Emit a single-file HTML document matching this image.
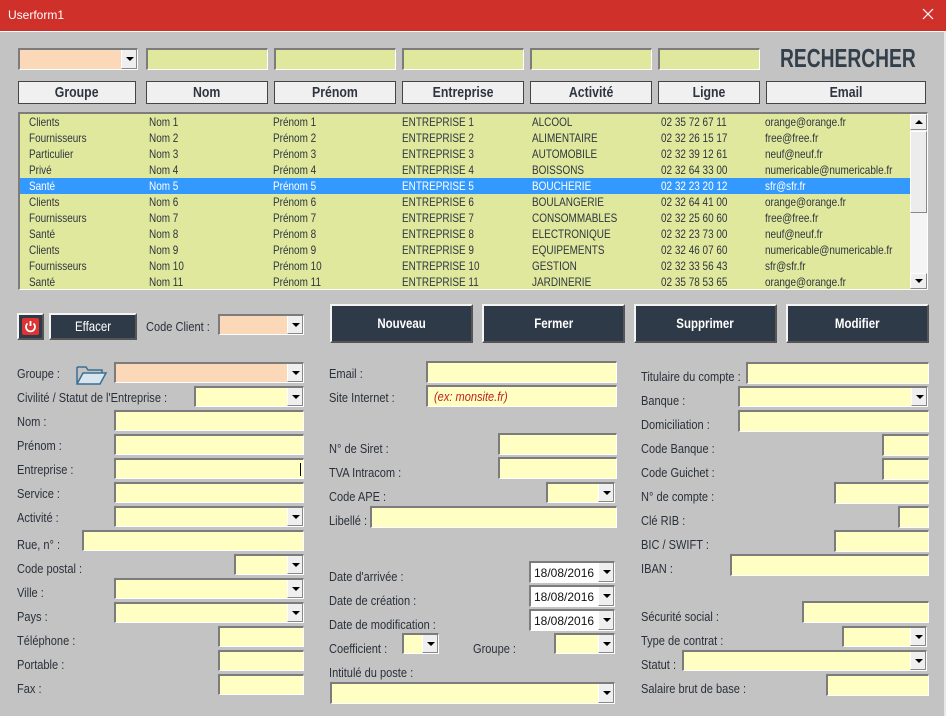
<!DOCTYPE html>
<html><head><meta charset="utf-8">
<style>
*{box-sizing:border-box;margin:0;padding:0}
body{width:946px;height:716px;background:#c3c3c3;position:relative;overflow:hidden;font-family:"Liberation Sans Narrow","Liberation Sans",sans-serif;color:#2f3540}
.a{position:absolute}
#tb{left:0;top:0;width:946px;height:31px;background:#d0302a;color:#fff;font-family:"Liberation Sans",sans-serif;font-size:12px;padding:8px 0 0 8px}
#frame{left:0;top:31px;width:946px;height:685px;border-top:1px solid #fff;border-right:2px solid #e8e8e8}
.in{position:absolute;background:#ffffc4;border-top:2px solid #7c7c7c;border-left:2px solid #7c7c7c;border-bottom:1px solid #fff;border-right:1px solid #fff}
.g{background:#dfe89c}
.p{background:#fbd8b8}
.w{background:#fff;font-family:"Liberation Sans",sans-serif;font-size:12px;padding:3px 0 0 3px;color:#111}
.dd{position:absolute;right:0;top:0;bottom:0;width:16px;background:#efefef;border-left:1px solid #fff;border-bottom:1px solid #888;border-right:1px solid #888}
.dd:after{content:"";position:absolute;left:4px;top:50%;margin-top:-2px;border-left:4px solid transparent;border-right:4px solid transparent;border-top:4px solid #000}
.hb{position:absolute;top:81px;height:23px;background:#f0f0f0;border:1px solid #444;font-weight:bold;font-size:15px;text-align:center;line-height:21px;color:#2f3540}
.hb span,.db span{display:inline-block;transform:scaleX(.82)}
.l{position:absolute;font-size:13px;color:#2a303a;white-space:nowrap;transform:scaleX(.85);transform-origin:left top;margin-top:-1px}
.db{position:absolute;background:#2e3a48;color:#fff;font-weight:bold;font-size:14px;text-align:center;border:2px solid #f4f4f4;border-right-color:#555;border-bottom-color:#555}
#list{left:18px;top:112px;width:910px;height:178px;background:#dfe89c;border-top:2px solid #7c7c7c;border-left:2px solid #7c7c7c;border-bottom:1px solid #fff;border-right:1px solid #fff;overflow:hidden}
.r{position:absolute;left:0;width:890px;height:16px;font-size:12px;line-height:16px}
.r span{position:absolute;white-space:nowrap;transform:scaleX(.83);transform-origin:left}
.sel{background:#3399ff;color:#fff}
</style></head><body>
<div id="tb" class="a">Userform1</div>
<svg class="a" style="left:922px;top:8px" width="12" height="12" viewBox="0 0 12 12"><path d="M1 1L11 11M11 1L1 11" stroke="#fff" stroke-width="1.2"/></svg>
<div id="frame" class="a"></div>

<div class="in p" style="left:18px;top:48px;width:120px;height:22px"><div class="dd"></div></div>
<div class="in g" style="left:146px;top:48px;width:122px;height:22px"></div>
<div class="in g" style="left:274px;top:48px;width:122px;height:22px"></div>
<div class="in g" style="left:402px;top:48px;width:122px;height:22px"></div>
<div class="in g" style="left:530px;top:48px;width:122px;height:22px"></div>
<div class="in g" style="left:658px;top:48px;width:102px;height:22px"></div>
<div class="a" style="left:780px;top:43px;font-size:26px;font-weight:bold;color:#333f4a;transform:scaleX(.74);transform-origin:left top;white-space:nowrap">RECHERCHER</div>

<div class="hb" style="left:18px;width:118px"><span>Groupe</span></div>
<div class="hb" style="left:146px;width:122px"><span>Nom</span></div>
<div class="hb" style="left:274px;width:122px"><span>Prénom</span></div>
<div class="hb" style="left:402px;width:122px"><span>Entreprise</span></div>
<div class="hb" style="left:530px;width:122px"><span>Activité</span></div>
<div class="hb" style="left:658px;width:102px"><span>Ligne</span></div>
<div class="hb" style="left:766px;width:160px"><span>Email</span></div>

<div id="list" class="a">
<div class="r" style="top:0"><span style="left:9px">Clients</span><span style="left:129px">Nom 1</span><span style="left:253px">Prénom 1</span><span style="left:382px">ENTREPRISE 1</span><span style="left:512px">ALCOOL</span><span style="left:641px">02 35 72 67 11</span><span style="left:745px">orange@orange.fr</span></div>
<div class="r" style="top:16px"><span style="left:9px">Fournisseurs</span><span style="left:129px">Nom 2</span><span style="left:253px">Prénom 2</span><span style="left:382px">ENTREPRISE 2</span><span style="left:512px">ALIMENTAIRE</span><span style="left:641px">02 32 26 15 17</span><span style="left:745px">free@free.fr</span></div>
<div class="r" style="top:32px"><span style="left:9px">Particulier</span><span style="left:129px">Nom 3</span><span style="left:253px">Prénom 3</span><span style="left:382px">ENTREPRISE 3</span><span style="left:512px">AUTOMOBILE</span><span style="left:641px">02 32 39 12 61</span><span style="left:745px">neuf@neuf.fr</span></div>
<div class="r" style="top:48px"><span style="left:9px">Privé</span><span style="left:129px">Nom 4</span><span style="left:253px">Prénom 4</span><span style="left:382px">ENTREPRISE 4</span><span style="left:512px">BOISSONS</span><span style="left:641px">02 32 64 33 00</span><span style="left:745px">numericable@numericable.fr</span></div>
<div class="r sel" style="top:64px"><span style="left:9px">Santé</span><span style="left:129px">Nom 5</span><span style="left:253px">Prénom 5</span><span style="left:382px">ENTREPRISE 5</span><span style="left:512px">BOUCHERIE</span><span style="left:641px">02 32 23 20 12</span><span style="left:745px">sfr@sfr.fr</span></div>
<div class="r" style="top:80px"><span style="left:9px">Clients</span><span style="left:129px">Nom 6</span><span style="left:253px">Prénom 6</span><span style="left:382px">ENTREPRISE 6</span><span style="left:512px">BOULANGERIE</span><span style="left:641px">02 32 64 41 00</span><span style="left:745px">orange@orange.fr</span></div>
<div class="r" style="top:96px"><span style="left:9px">Fournisseurs</span><span style="left:129px">Nom 7</span><span style="left:253px">Prénom 7</span><span style="left:382px">ENTREPRISE 7</span><span style="left:512px">CONSOMMABLES</span><span style="left:641px">02 32 25 60 60</span><span style="left:745px">free@free.fr</span></div>
<div class="r" style="top:112px"><span style="left:9px">Santé</span><span style="left:129px">Nom 8</span><span style="left:253px">Prénom 8</span><span style="left:382px">ENTREPRISE 8</span><span style="left:512px">ELECTRONIQUE</span><span style="left:641px">02 32 23 73 00</span><span style="left:745px">neuf@neuf.fr</span></div>
<div class="r" style="top:128px"><span style="left:9px">Clients</span><span style="left:129px">Nom 9</span><span style="left:253px">Prénom 9</span><span style="left:382px">ENTREPRISE 9</span><span style="left:512px">EQUIPEMENTS</span><span style="left:641px">02 32 46 07 60</span><span style="left:745px">numericable@numericable.fr</span></div>
<div class="r" style="top:144px"><span style="left:9px">Fournisseurs</span><span style="left:129px">Nom 10</span><span style="left:253px">Prénom 10</span><span style="left:382px">ENTREPRISE 10</span><span style="left:512px">GESTION</span><span style="left:641px">02 32 33 56 43</span><span style="left:745px">sfr@sfr.fr</span></div>
<div class="r" style="top:160px"><span style="left:9px">Santé</span><span style="left:129px">Nom 11</span><span style="left:253px">Prénom 11</span><span style="left:382px">ENTREPRISE 11</span><span style="left:512px">JARDINERIE</span><span style="left:641px">02 35 78 53 65</span><span style="left:745px">orange@orange.fr</span></div>
<div class="a" style="left:890px;top:0;width:17px;height:175px;background:#f4f4f4">
 <div class="a" style="left:0;top:0;width:17px;height:16px;background:#efefef;border:1px solid #888;border-top-color:#fff;border-left-color:#fff"><div class="a" style="left:4px;top:5px;border-left:4px solid transparent;border-right:4px solid transparent;border-bottom:4px solid #000"></div></div>
 <div class="a" style="left:0;top:17px;width:17px;height:82px;background:#ececec;border:1px solid #888;border-top-color:#fff;border-left-color:#fff"></div>
 <div class="a" style="left:0;top:159px;width:17px;height:16px;background:#efefef;border:1px solid #888;border-top-color:#fff;border-left-color:#fff"><div class="a" style="left:4px;top:5px;border-left:4px solid transparent;border-right:4px solid transparent;border-top:4px solid #000"></div></div>
</div>
</div>

<div class="db" style="left:17px;top:313px;width:27px;height:27px;background:#2e3a48">
 <div class="a" style="left:3px;top:3px;width:17px;height:17px;background:#d33;border-radius:2px"><svg width="17" height="17" viewBox="0 0 17 17"><path d="M5.5 5.5A4.5 4.5 0 1 0 11.5 5.5" stroke="#fff" stroke-width="1.8" fill="none"/><path d="M8.5 3v5" stroke="#fff" stroke-width="1.8"/></svg></div>
</div>
<div class="db" style="left:49px;top:313px;width:88px;height:27px;line-height:23px;font-weight:normal;font-size:14px"><span>Effacer</span></div>
<div class="l" style="left:146px;top:320px">Code Client :</div>
<div class="in p" style="left:218px;top:314px;width:86px;height:21px"><div class="dd"></div></div>

<div class="db" style="left:330px;top:304px;width:143px;height:39px;line-height:35px"><span>Nouveau</span></div>
<div class="db" style="left:482px;top:304px;width:143px;height:39px;line-height:35px"><span>Fermer</span></div>
<div class="db" style="left:634px;top:304px;width:143px;height:39px;line-height:35px"><span>Supprimer</span></div>
<div class="db" style="left:786px;top:304px;width:143px;height:39px;line-height:35px"><span>Modifier</span></div>

<!-- left column -->
<div class="l" style="left:17px;top:367px">Groupe :</div>
<svg class="a" style="left:75px;top:364px" width="34" height="22" viewBox="0 0 34 22"><path d="M2 3h9l2 3h14v4" fill="none" stroke="#3a6f93" stroke-width="1.5"/><path d="M2 3v17h23l6-11H8L2 20" fill="#d8e4ee" stroke="#3a6f93" stroke-width="1.5"/></svg>
<div class="in p" style="left:114px;top:362px;width:190px;height:21px"><div class="dd"></div></div>
<div class="l" style="left:17px;top:391px">Civilité / Statut de l'Entreprise :</div>
<div class="in" style="left:194px;top:386px;width:110px;height:21px"><div class="dd"></div></div>
<div class="l" style="left:17px;top:415px">Nom :</div>
<div class="in" style="left:114px;top:410px;width:190px;height:21px"></div>
<div class="l" style="left:17px;top:439px">Prénom :</div>
<div class="in" style="left:114px;top:434px;width:190px;height:21px"></div>
<div class="l" style="left:17px;top:463px">Entreprise :</div>
<div class="in" style="left:114px;top:458px;width:190px;height:21px"><div class="a" style="right:2px;top:3px;width:1px;height:13px;background:#000"></div></div>
<div class="l" style="left:17px;top:487px">Service :</div>
<div class="in" style="left:114px;top:482px;width:190px;height:21px"></div>
<div class="l" style="left:17px;top:511px">Activité :</div>
<div class="in" style="left:114px;top:506px;width:190px;height:21px"><div class="dd"></div></div>
<div class="l" style="left:17px;top:538px">Rue, n° :</div>
<div class="in" style="left:82px;top:530px;width:222px;height:21px"></div>
<div class="l" style="left:17px;top:562px">Code postal :</div>
<div class="in" style="left:234px;top:554px;width:70px;height:21px"><div class="dd"></div></div>
<div class="l" style="left:17px;top:586px">Ville :</div>
<div class="in" style="left:114px;top:578px;width:190px;height:21px"><div class="dd"></div></div>
<div class="l" style="left:17px;top:610px">Pays :</div>
<div class="in" style="left:114px;top:602px;width:190px;height:21px"><div class="dd"></div></div>
<div class="l" style="left:17px;top:634px">Téléphone :</div>
<div class="in" style="left:218px;top:626px;width:86px;height:21px"></div>
<div class="l" style="left:17px;top:658px">Portable :</div>
<div class="in" style="left:218px;top:650px;width:86px;height:21px"></div>
<div class="l" style="left:17px;top:682px">Fax :</div>
<div class="in" style="left:218px;top:674px;width:86px;height:21px"></div>

<!-- middle -->
<div class="l" style="left:329px;top:367px">Email :</div>
<div class="in" style="left:426px;top:361px;width:191px;height:22px"></div>
<div class="l" style="left:329px;top:391px">Site Internet :</div>
<div class="in" style="left:426px;top:385px;width:191px;height:22px;color:#c0201a;font-style:italic;font-size:13px;padding:2px 0 0 6px"><span style="display:inline-block;transform:scaleX(.85);transform-origin:left">(ex: monsite.fr)</span></div>
<div class="l" style="left:329px;top:442px">N° de Siret :</div>
<div class="in" style="left:498px;top:433px;width:119px;height:22px"></div>
<div class="l" style="left:329px;top:466px">TVA Intracom :</div>
<div class="in" style="left:498px;top:457px;width:119px;height:22px"></div>
<div class="l" style="left:329px;top:490px">Code APE :</div>
<div class="in" style="left:546px;top:482px;width:69px;height:21px"><div class="dd"></div></div>
<div class="l" style="left:329px;top:514px">Libellé :</div>
<div class="in" style="left:370px;top:506px;width:247px;height:22px"></div>
<div class="l" style="left:329px;top:570px">Date d'arrivée :</div>
<div class="in w" style="left:529px;top:561px;width:86px;height:22px">18/08/2016<div class="dd"></div></div>
<div class="l" style="left:329px;top:594px">Date de création :</div>
<div class="in w" style="left:529px;top:585px;width:86px;height:22px">18/08/2016<div class="dd"></div></div>
<div class="l" style="left:329px;top:618px">Date de modification :</div>
<div class="in w" style="left:529px;top:609px;width:86px;height:22px">18/08/2016<div class="dd"></div></div>
<div class="l" style="left:329px;top:642px">Coefficient :</div>
<div class="in" style="left:402px;top:633px;width:37px;height:21px"><div class="dd"></div></div>
<div class="l" style="left:473px;top:642px">Groupe :</div>
<div class="in" style="left:554px;top:633px;width:61px;height:21px"><div class="dd"></div></div>
<div class="l" style="left:329px;top:666px">Intitulé du poste :</div>
<div class="in" style="left:330px;top:682px;width:285px;height:22px"><div class="dd"></div></div>

<!-- right -->
<div class="l" style="left:641px;top:370px">Titulaire du compte :</div>
<div class="in" style="left:746px;top:362px;width:183px;height:22px"></div>
<div class="l" style="left:641px;top:394px">Banque :</div>
<div class="in" style="left:738px;top:386px;width:190px;height:21px"><div class="dd"></div></div>
<div class="l" style="left:641px;top:418px">Domiciliation :</div>
<div class="in" style="left:738px;top:410px;width:191px;height:22px"></div>
<div class="l" style="left:641px;top:442px">Code Banque :</div>
<div class="in" style="left:882px;top:434px;width:47px;height:22px"></div>
<div class="l" style="left:641px;top:466px">Code Guichet :</div>
<div class="in" style="left:882px;top:458px;width:47px;height:22px"></div>
<div class="l" style="left:641px;top:490px">N° de compte :</div>
<div class="in" style="left:834px;top:482px;width:95px;height:22px"></div>
<div class="l" style="left:641px;top:514px">Clé RIB :</div>
<div class="in" style="left:898px;top:506px;width:31px;height:22px"></div>
<div class="l" style="left:641px;top:538px">BIC / SWIFT :</div>
<div class="in" style="left:834px;top:530px;width:95px;height:22px"></div>
<div class="l" style="left:641px;top:562px">IBAN :</div>
<div class="in" style="left:730px;top:554px;width:199px;height:22px"></div>
<div class="l" style="left:641px;top:610px">Sécurité social :</div>
<div class="in" style="left:802px;top:601px;width:127px;height:22px"></div>
<div class="l" style="left:641px;top:634px">Type de contrat :</div>
<div class="in" style="left:842px;top:626px;width:85px;height:21px"><div class="dd"></div></div>
<div class="l" style="left:641px;top:658px">Statut :</div>
<div class="in" style="left:682px;top:650px;width:245px;height:21px"><div class="dd"></div></div>
<div class="l" style="left:641px;top:682px">Salaire brut de base :</div>
<div class="in" style="left:826px;top:674px;width:103px;height:22px"></div>
</body></html>
